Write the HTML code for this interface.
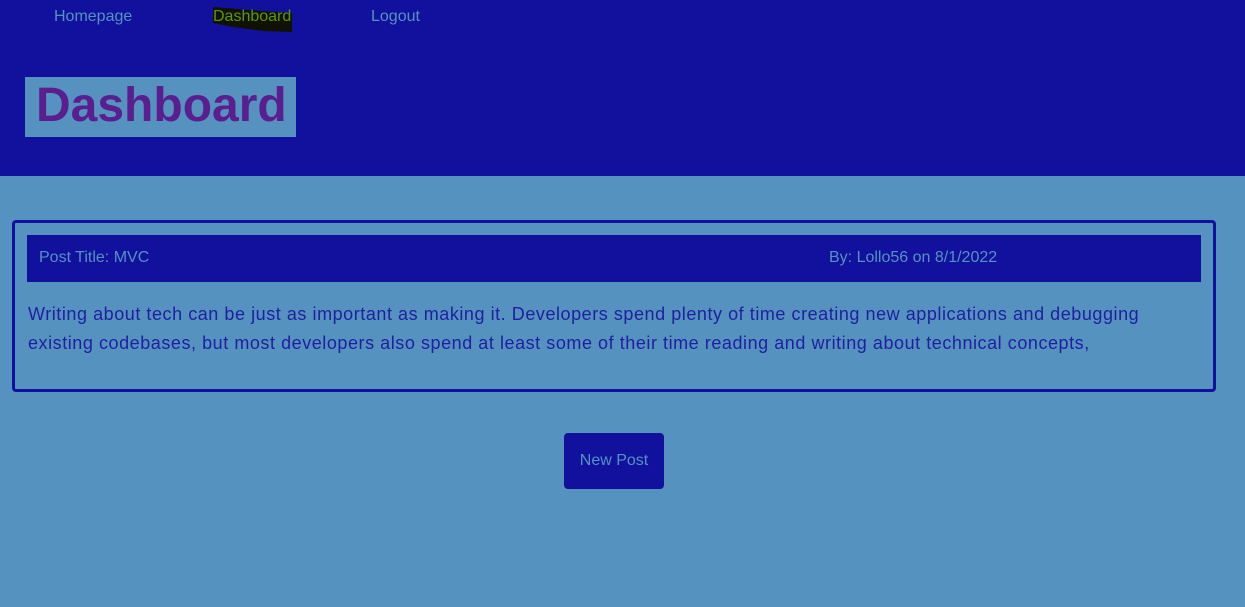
<!DOCTYPE html>
<html><head><style>
body{margin:0;width:1245px;height:607px;background:#5592c0;font-family:"Liberation Sans",sans-serif;overflow:hidden;position:relative}
.hdr{position:absolute;left:0;top:0;width:1245px;height:176px;background:#11119e}
.nav{position:absolute;top:8px;font-size:16px;color:#5592c0}
.title{position:absolute;left:25px;top:77px;width:271px;height:60px;background:#5592c0;color:#5b1e8f;font-weight:bold;font-size:48px;line-height:58px;padding-left:11px;box-sizing:border-box}
.card{position:absolute;left:12px;top:220px;width:1204px;height:172px;border:3px solid #11119e;border-radius:4px;box-sizing:border-box}
.ch{position:absolute;left:27px;top:235px;width:1174px;height:47px;background:#11119e;color:#5592c0;font-size:16px}
.txt{position:absolute;left:28px;top:300px;width:1150px;font-size:18px;line-height:29px;color:#1f1fa0;letter-spacing:0.55px}
.btn{position:absolute;left:564px;top:433px;width:100px;height:56px;background:#11119e;border-radius:4px;color:#5592c0;font-size:16px;text-align:center;line-height:56px}
</style></head><body>
<div class="hdr"></div>
<div class="nav" style="left:54px">Homepage</div>
<svg style="position:absolute;left:213px;top:7px" width="80" height="26"><path d="M0 0 L50 4 L79 6 L79 25 L50 24 L20 20 L0 16 Z" fill="#111100"/></svg>
<div class="nav" style="left:213px;color:#5a9a00">Dashboard</div>
<div class="nav" style="left:371px">Logout</div>
<div class="title">Dashboard</div>
<div class="card"></div>
<div class="ch"><span style="position:absolute;left:12px;top:14px">Post Title: MVC</span><span style="position:absolute;left:802px;top:14px">By: Lollo56 on 8/1/2022</span></div>
<div class="txt">Writing about tech can be just as important as making it. Developers spend plenty of time creating new applications and debugging existing codebases, but most developers also spend at least some of their time reading and writing about technical concepts,</div>
<div class="btn">New Post</div>
</body></html>
